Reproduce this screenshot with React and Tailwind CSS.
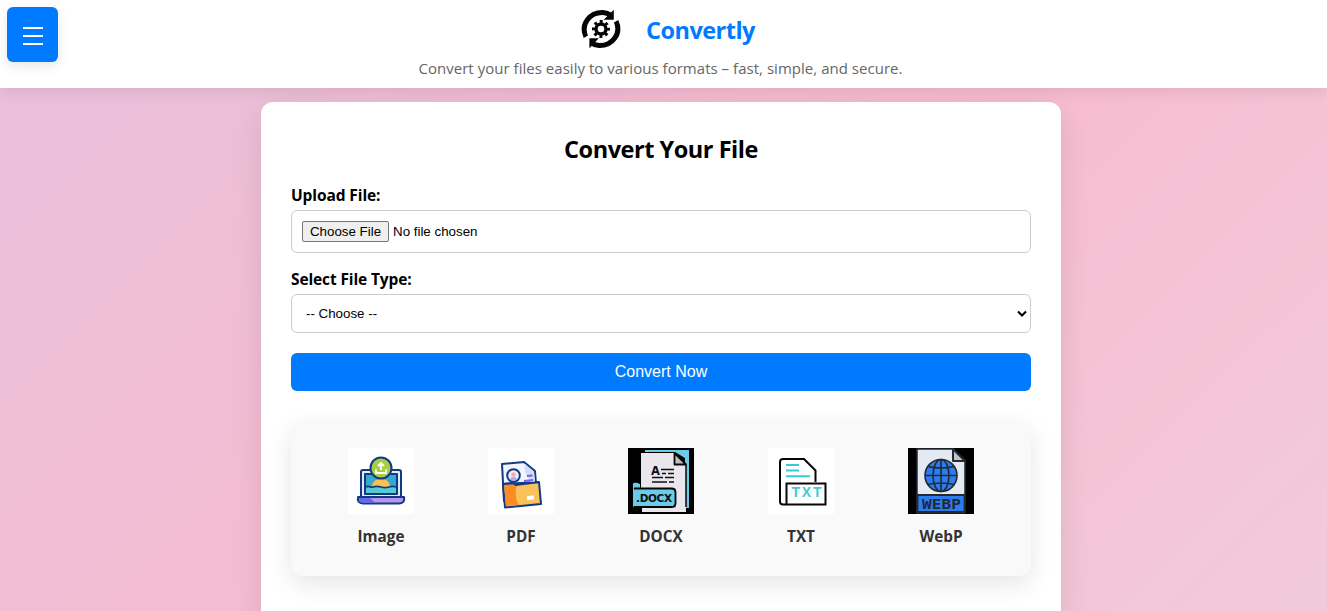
import React from "react";

function LogoIcon() {
  return (
    <svg viewBox="0 0 40 40" className="h-10 w-10">
      <g fill="none" stroke="#050505" strokeWidth="5">
        <path d="M5 28C-1 15 9 3 22 3.400c3 .3 5.600 1.300 8 3" />
        <path d="M35 12C41 25 31 37 18 36.600c-3-.3-5.600-1.300-8-3" />
      </g>
      <path d="M32.800.8v10H22.600zM8.400 39.200v-10H17.800z" fill="#050505" />
      <path d="M30.500 14.500l6-4M3.500 29.500l6-4" stroke="white" strokeWidth="1.300" />
      <circle cx="20" cy="20" r="5" fill="none" stroke="#050505" strokeWidth="3.400" />
      <circle cx="20" cy="20" r="7.500" fill="none" stroke="#050505" strokeWidth="3" strokeDasharray="2.900 2.990" strokeDashoffset="1.450" />
    </svg>
  );
}

function ImageIcon() {
  return (
    <svg viewBox="0 0 66 66" className="size-[66px] bg-white">
      <g stroke="#123a83" strokeWidth="2" strokeLinejoin="round">
        <rect x="13" y="22" width="40" height="28" rx="2" fill="#dfeafb" />
        <path d="M17 26h32v20H17z" fill="#35a9cf" />
        <path d="M10 49h46c1 5-2 6.500-5 6.500H15c-4 0-6-2.500-5-6.500z" fill="#b894ea" />
      </g>
      <path d="M11 50h11l5 4.500H15c-3 0-4-2-4-4.500z" fill="#6865f0" />
      <path d="M24 39c0-11 18-11 18 0z" fill="#fdc04e" />
      <path d="M18 39c3-2 4 1 7 0s5-1 8 0 5 1 8 0 4-1 7 0v6H18z" fill="#57cbd1" />
      <path d="M18 39c3-2 4 1 7 0s5-1 8 0 5 1 8 0 4-1 7 0" fill="none" stroke="#123a83" strokeWidth="1.800" />
      <circle cx="33" cy="20" r="10.500" fill="#a7cf43" stroke="#123a83" strokeWidth="2" />
      <path d="M28 21.500V25h10v-3.500M33 22v-7m-3 3 3-3 3 3" fill="none" stroke="white" strokeWidth="1.800" />
    </svg>
  );
}

function PdfIcon() {
  return (
    <svg viewBox="0 0 66 66" className="size-[66px] bg-white">
      <g stroke="#123a83" strokeWidth="2" strokeLinejoin="round">
        <path d="m14 16 22-2 11 9 2 27-33 3z" fill="#f2f4fe" />
        <path d="m15 36 36-2 2 22-36 3.500z" fill="#fac15a" />
      </g>
      <path d="m37 16 9 8 1 10-4 1c-2-6-8-9-6-19z" fill="#d5dafb" />
      <path d="m16 37 13-1c-2 7-2 16 2 21l-13 1z" fill="#fb8b24" />
      <path d="m15 36 10-1 3 2 23-3" fill="none" stroke="#123a83" strokeWidth="2" />
      <circle cx="25.500" cy="27.500" r="6.300" fill="#eef0ff" stroke="#123a83" strokeWidth="2" />
      <circle cx="25.500" cy="26.500" r="2.200" fill="#f8aaa2" />
      <path d="M22 31c1-3 6-3 7 0-2 2-5 2-7 0z" fill="#c5a5ed" />
      <path d="m39 28 5.500-.5M36 33l9-1" stroke="#7161ef" strokeWidth="2" />
      <path d="m39 48 7-.5v4l-7 .5z" fill="white" />
    </svg>
  );
}

function DocxIcon() {
  return (
    <svg viewBox="0 0 66 66" className="size-[66px] bg-black">
      <path d="M17 2h44v58h-4V10L47 4H17z" fill="#6bcce9" />
      <path d="M13 5h33l12 12v47H14V44h-1z" fill="#e9e6ec" />
      <path d="M46.500 5v11.500H58z" fill="#bfbfc3" stroke="#080808" strokeWidth="1.800" strokeLinejoin="round" />
      <path d="M58 17v42" stroke="#050505" strokeWidth="1.500" />
      <path d="M5 36c1-2 4-1 7 0v4h36v20H8c-3 0-3-2-3-4z" fill="#6bcce9" />
      <path d="M6 40.500h37.500c3 0 4 1 4 4v10.500c0 3-1 4-4 4H6" fill="none" stroke="#050505" strokeWidth="1.800" />
      <text x="26" y="53.500" textAnchor="middle" textLength="36" fontFamily="DejaVu Sans" fontWeight="700" fontSize="10.500" fill="#101010">.DOCX</text>
      <text x="27.500" y="27" textAnchor="middle" fontFamily="DejaVu Sans" fontWeight="700" fontSize="11.500" fill="#101010">A</text>
      <path d="M33 21.500h13M34 25.500h4m2 0h6M24 29.500h11m2 0h9M24 34h15m2 0h5" stroke="#101010" strokeWidth="1.700" />
    </svg>
  );
}

function TxtIcon() {
  return (
    <svg viewBox="0 0 66 66" className="size-[66px] bg-white">
      <path d="M18 56.500h-3q-3 0-3-3V14q0-3 3-3h21l11.500 11.500V34" fill="none" stroke="#070707" strokeWidth="2" />
      <path d="M18.500 35.500h39v21h-39z" fill="white" stroke="#070707" strokeWidth="2" />
      <path d="M18 17h13M18 22.500h13M18 28.300h24" stroke="#36cbd1" strokeWidth="2" />
      <text x="38.500" y="49.200" textAnchor="middle" textLength="30" fontFamily="Liberation Sans" fontWeight="700" fontSize="14" fill="#40cbd0">TXT</text>
    </svg>
  );
}

function WebpIcon() {
  return (
    <svg viewBox="0 0 66 66" className="size-[66px] bg-black">
      <path d="M9 1h36l12 12v52H9z" fill="#e5e9f4" stroke="#242a2e" strokeWidth="1.500" />
      <path d="M45 1v12h12z" fill="#bbc5d1" stroke="#242a2e" strokeWidth="2" strokeLinejoin="round" />
      <path d="M9.500 47h47v17h-47z" fill="#2c7cf0" stroke="#242a2e" strokeWidth="1.800" />
      <g fill="none" stroke="#242a2e" strokeWidth="1.600">
        <circle cx="33" cy="27.500" r="16" fill="#2c7cf0" />
        <ellipse cx="33" cy="27.500" rx="8" ry="16" />
        <path d="M33 11.500v32M17 27.500h32M20 18.500q13 3 26 0M20 36.500q13-3 26 0" />
      </g>
      <text x="33.500" y="60.900" textAnchor="middle" textLength="39" lengthAdjust="spacingAndGlyphs" fontFamily="DejaVu Sans Mono" fontWeight="700" fontSize="13.500" fill="#202a36">WEBP</text>
    </svg>
  );
}

const formats = [
  { name: "Image", Icon: ImageIcon },
  { name: "PDF", Icon: PdfIcon },
  { name: "DOCX", Icon: DocxIcon },
  { name: "TXT", Icon: TxtIcon },
  { name: "WebP", Icon: WebpIcon },
];

export default function App() {
  return (
    <div className="h-[611px] overflow-hidden bg-[linear-gradient(135deg,#e8c0dc_0px,#f8bbcf_750px,#f1cbdb_1370px)] font-['Open_Sans','Noto_Sans',sans-serif] text-base text-black">
      <header className="relative flex h-[88px] flex-col items-center bg-white pr-[6px] shadow-[0_2px_15px_rgba(0,0,0,0.1)]">
        <button aria-label="Open menu" className="absolute top-[7px] left-[7px] flex h-[55px] w-[51px] items-center justify-center rounded-[6px] bg-[#007bff] shadow-[0_4px_12px_rgba(0,0,0,0.1)]">
          <svg viewBox="0 0 20 20" className="size-5" stroke="white" strokeWidth="2">
            <path d="M0 3h20M0 11h20M0 19h20" />
          </svg>
        </button>
        <div className="flex h-[57px] items-center gap-[25px] pl-[15px]">
          <LogoIcon />
          <h1 className="pt-[3px] text-[23.5px] leading-8 font-bold tracking-[-0.52px] text-[#007bff]"><span className="inline-block w-[109px] whitespace-nowrap">Convertly</span></h1>
        </div>
        <p className="text-[15px] leading-[22px] tracking-[0.03px] whitespace-nowrap text-[#666]">Convert your files easily to various formats – fast, simple, and secure.</p>
      </header>
      <main className="mt-[14px] ml-[261px] h-[600px] w-[800px] rounded-xl bg-white px-[30px] pt-[29px] shadow-[0_8px_30px_rgba(0,0,0,0.1)]">
        <h2 className="text-center text-[23.5px] leading-9 font-bold tracking-[-0.47px]">Convert Your File</h2>
        <label className="mt-4 block text-[15.5px] leading-6 font-bold tracking-[-0.1px]">Upload File:</label>
        <div className="mt-[3px] flex h-[43px] items-center gap-1 rounded-[6px] border border-[#ccc] px-[10px] font-['Liberation_Sans',sans-serif] text-[13.333px]">
          <button className="h-[21px] w-[87px] rounded-[2px] border border-[#767676] bg-[#efefef] leading-[17px]">Choose File</button>
          <span>No file chosen</span>
        </div>
        <label className="mt-[14px] block text-[15.5px] leading-6 font-bold tracking-[-0.12px]">Select File Type:</label>
        <div className="mt-[3px] flex h-[39px] items-center justify-between rounded-[6px] border border-[#ccc] pr-[3px] pl-[14px] font-['Liberation_Sans',sans-serif] text-[13.333px]">
          <span>-- Choose --</span>
          <svg viewBox="0 0 10 8" className="h-2 w-[10px]" fill="none" stroke="black" strokeWidth="2"><path d="m1 1.500 4 4 4-4" /></svg>
        </div>
        <button className="mt-5 h-[38px] w-full rounded-[6px] bg-[#007bff] font-['Liberation_Sans',sans-serif] text-base text-white">Convert Now</button>
        <section className="mt-[30px] flex h-[155px] justify-center rounded-xl bg-[#f9f9f9] pt-[27px] shadow-[0_8px_24px_rgba(0,0,0,0.1)]">
          {formats.map(({ name, Icon }) => (
            <div key={name} className="flex w-[140px] flex-col items-center">
              <Icon />
              <span className="mt-[10px] text-[15.3px] leading-6 font-bold text-[#333]">{name}</span>
            </div>
          ))}
        </section>
      </main>
    </div>
  );
}
